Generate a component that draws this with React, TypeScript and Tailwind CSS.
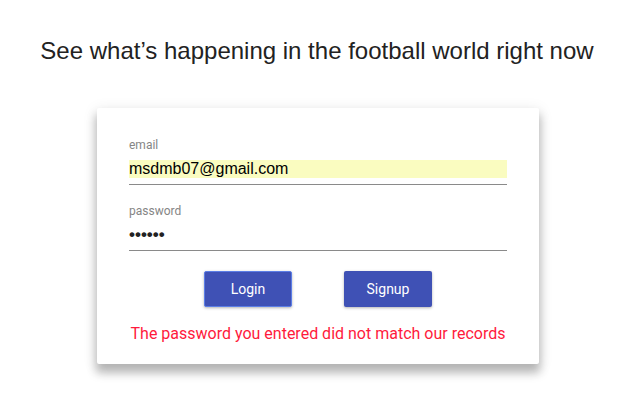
import React from "react";

export default function App() {
  return (
    <div className="w-[642px] h-[413px] bg-white flex flex-col items-center overflow-hidden">
      <h1 className="mt-[37px] mr-[8px] text-[24px] leading-[28px] text-[#222] font-['Liberation_Sans',Arial,sans-serif] font-normal">
        See what’s happening in the football world right now
      </h1>
      <div className="mt-[43px] ml-[-6px] w-[442px] bg-white rounded-[2px] shadow-[0_8px_10px_1px_rgba(0,0,0,0.25),0_3px_14px_2px_rgba(0,0,0,0.08)] px-[32px] pt-[30px] pb-[20px] font-['Roboto',sans-serif]">
        <div className="flex flex-col">
          <label className="text-[12px] leading-[14px] text-[#858585]">email</label>
          <div className="mt-[8px] pb-[6px] border-b border-[#8a8a8a]">
            <div className="h-[18px] bg-[#fafcc0] text-[16px] leading-[18px] text-black font-['Liberation_Sans',Arial,sans-serif]">
              msdmb07@gmail.com
            </div>
          </div>
        </div>
        <div className="flex flex-col mt-[19px]">
          <label className="text-[12px] leading-[14px] text-[#858585]">password</label>
          <div className="mt-[8px] pb-[6px] border-b border-[#8a8a8a]">
            <div className="h-[18px] text-[17px] leading-[18px] text-[#222] font-['Liberation_Sans',Arial,sans-serif] font-bold">
              ••••••
            </div>
          </div>
        </div>
        <div className="flex justify-center gap-[52px] mt-[20px]">
          <button className="w-[88px] h-[36px] bg-[#3f51b5] text-white text-[14px] rounded-[2px] border border-[#5c7ee6] shadow-[0_1px_3px_rgba(0,0,0,0.3)]">
            Login
          </button>
          <button className="w-[88px] h-[36px] bg-[#3f51b5] text-white text-[14px] rounded-[2px] shadow-[0_1px_3px_rgba(0,0,0,0.3)]">
            Signup
          </button>
        </div>
        <p className="mt-[17px] text-center text-[16px] leading-[20px] text-[#ff1a3c]">
          The password you entered did not match our records
        </p>
      </div>
    </div>
  );
}
